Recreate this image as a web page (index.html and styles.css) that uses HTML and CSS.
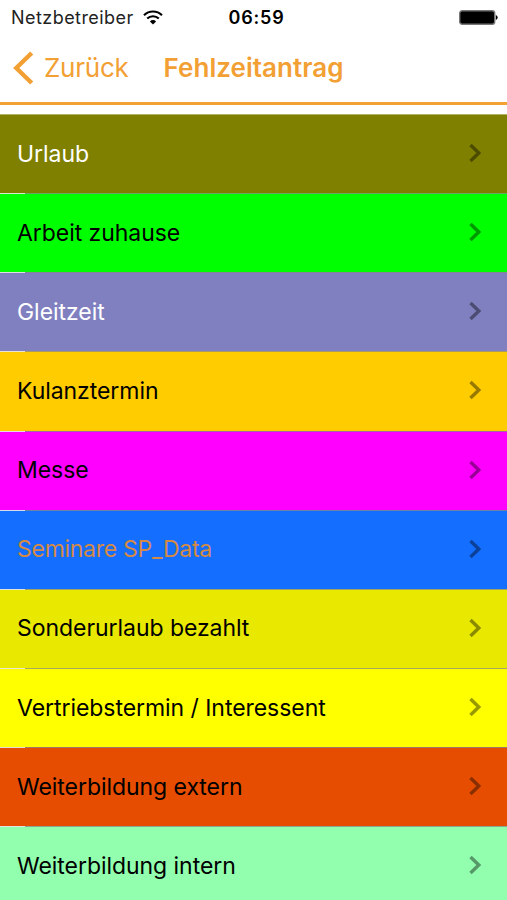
FILE: index.html
```html
<!DOCTYPE html>
<html lang="de">
<head>
<meta charset="utf-8">
<title>Fehlzeitantrag</title>
<link rel="stylesheet" href="styles.css">
</head>
<body>
<header class="status">
<div class="carrier"><span class="carrier-name">Netzbetreiber</span>
<svg class="wifi" viewBox="0 0 20 15"><path d="M1 5.2a12.7 12.7 0 0 1 18 0M4.2 8.6a8.2 8.2 0 0 1 11.6 0" fill="none" stroke="#000" stroke-width="2.1"/><path d="M6.9 11.4a4.4 4.4 0 0 1 6.2 0L10 14.6z"/></svg></div>
<span class="time">06:59</span>
<svg class="battery" viewBox="0 0 39 15"><rect x=".7" y=".7" width="35" height="13.6" rx="2.5" fill="#000" stroke="#777" stroke-width="1.4"/><path d="M36.8 5a2.6 2.6 0 0 1 0 5z"/></svg>
</header>
<nav class="nav">
<svg class="back" viewBox="0 0 22 34"><path d="M18.7 2L3.3 17l15.4 15" fill="none" stroke="currentColor" stroke-width="4.4"/></svg>
<span class="back-label">Zurück</span>
<h1 class="title">Fehlzeitantrag</h1>
</nav>
<main class="list">
<div class="row olive"><span class="label">Urlaub</span><svg class="chev" viewBox="0 0 14 20"><path d="M2.5 2l8.3 8-8.3 8"/></svg></div>
<div class="row green"><span class="label">Arbeit zuhause</span><svg class="chev" viewBox="0 0 14 20"><path d="M2.5 2l8.3 8-8.3 8"/></svg></div>
<div class="row lilac"><span class="label">Gleitzeit</span><svg class="chev" viewBox="0 0 14 20"><path d="M2.5 2l8.3 8-8.3 8"/></svg></div>
<div class="row amber"><span class="label">Kulanztermin</span><svg class="chev" viewBox="0 0 14 20"><path d="M2.5 2l8.3 8-8.3 8"/></svg></div>
<div class="row magenta"><span class="label">Messe</span><svg class="chev" viewBox="0 0 14 20"><path d="M2.5 2l8.3 8-8.3 8"/></svg></div>
<div class="row blue"><span class="label">Seminare SP_Data</span><svg class="chev" viewBox="0 0 14 20"><path d="M2.5 2l8.3 8-8.3 8"/></svg></div>
<div class="row lime"><span class="label">Sonderurlaub bezahlt</span><svg class="chev" viewBox="0 0 14 20"><path d="M2.5 2l8.3 8-8.3 8"/></svg></div>
<div class="row yellow"><span class="label">Vertriebstermin / Interessent</span><svg class="chev" viewBox="0 0 14 20"><path d="M2.5 2l8.3 8-8.3 8"/></svg></div>
<div class="row red"><span class="label">Weiterbildung extern</span><svg class="chev" viewBox="0 0 14 20"><path d="M2.5 2l8.3 8-8.3 8"/></svg></div>
<div class="row mint"><span class="label">Weiterbildung intern</span><svg class="chev" viewBox="0 0 14 20"><path d="M2.5 2l8.3 8-8.3 8"/></svg></div>
</main>
</body>
</html>
```
FILE: styles.css
```css
* { box-sizing: border-box; }
body { margin: 0; height: 900px; overflow: hidden; background: #fff; color: #000; font-family: Inter, sans-serif; }
.status { height: 34px; padding: 0 9px 0 11px; display: grid; grid-template-columns: 1fr auto 1fr; align-items: center; font-size: 18px; }
.carrier { display: flex; align-items: center; gap: 9px; color: #222; }
.carrier-name { letter-spacing: .45px; }
.wifi { width: 20px; height: 15px; }
.time { font-weight: 600; letter-spacing: .8px; transform: translateX(2px); }
.battery { width: 39px; height: 15px; justify-self: end; }
.nav { height: 71px; padding: 0 0 1px 13px; display: flex; align-items: center; border-bottom: 3px solid #f2a234; color: #f2a034; font-size: 26px; }
.back { width: 22px; height: 34px; margin-right: 9px; }
.back-label { letter-spacing: -.25px; }
.title { margin: 0 0 0 35px; font-size: 26px; font-weight: 600; letter-spacing: .04px; }
.list { margin-top: 9px; }
.row { height: 79.15px; padding: 0 25px 0 17px; display: flex; align-items: center; justify-content: space-between; font-size: 23px; letter-spacing: -.05px; background-image: linear-gradient(#fffb, #fffb), linear-gradient(#888b, #888b); background-size: 25px 1px, 100% 1px; background-repeat: no-repeat; }
.row:first-child { background-image: linear-gradient(#fff6, #fff6); background-size: 100% 1px; }
.chev { width: 14px; height: 20px; margin-bottom: 1px; fill: none; stroke: #000; stroke-width: 3.4; opacity: .4; }
.olive { background-color: #808000; color: #fff; }
.green { background-color: #00ff00; }
.lilac { background-color: #8080c0; color: #fff; }
.amber { background-color: #ffcc00; }
.magenta { background-color: #ff00ff; }
.blue { background-color: #146eff; color: #d48a45; letter-spacing: -.27px; }
.lime { background-color: #e8e800; }
.yellow { background-color: #ffff00; }
.red { background-color: #e64d00; }
.mint { background-color: #91ffae; }
```
